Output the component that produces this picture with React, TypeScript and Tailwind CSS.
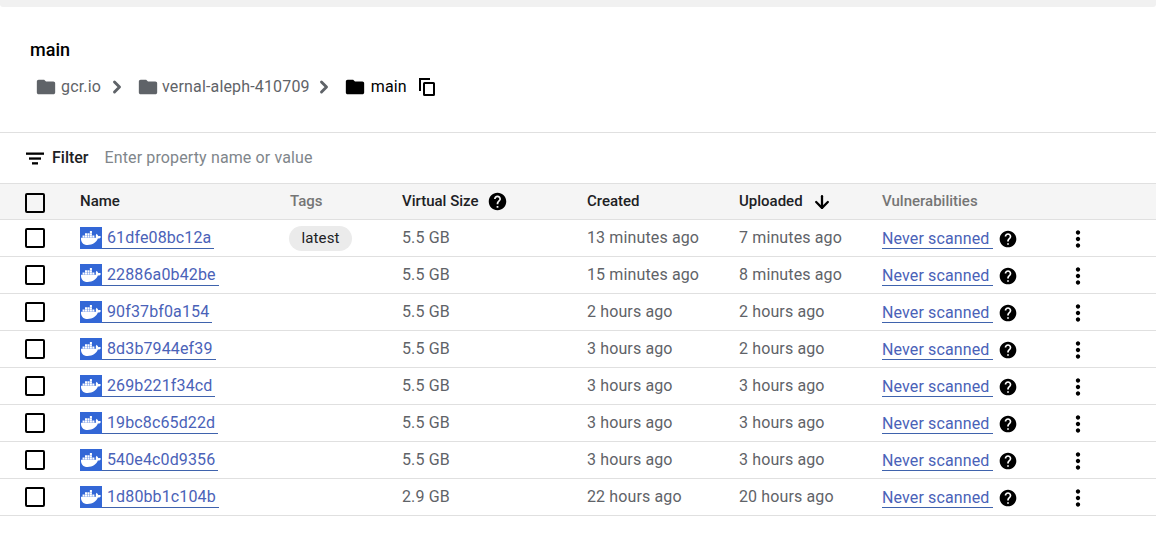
import { ArrowDown, ChevronRight } from "lucide-react";
import { FaDocker } from "react-icons/fa";
import { MdFolder, MdHelp, MdMoreVert } from "react-icons/md";

const images = [
  { digest: "61dfe08bc12a", tag: "latest", size: "5.5 GB", created: "13 minutes ago", uploaded: "7 minutes ago" },
  { digest: "22886a0b42be", size: "5.5 GB", created: "15 minutes ago", uploaded: "8 minutes ago" },
  { digest: "90f37bf0a154", size: "5.5 GB", created: "2 hours ago", uploaded: "2 hours ago" },
  { digest: "8d3b7944ef39", size: "5.5 GB", created: "3 hours ago", uploaded: "2 hours ago" },
  { digest: "269b221f34cd", size: "5.5 GB", created: "3 hours ago", uploaded: "3 hours ago" },
  { digest: "19bc8c65d22d", size: "5.5 GB", created: "3 hours ago", uploaded: "3 hours ago" },
  { digest: "540e4c0d9356", size: "5.5 GB", created: "3 hours ago", uploaded: "3 hours ago" },
  { digest: "1d80bb1c104b", size: "2.9 GB", created: "22 hours ago", uploaded: "20 hours ago" },
];

const columns = "grid grid-cols-[80px_210px_112px_185px_152px_143px_185px_1fr] items-center";

function Checkbox({ className = "" }: { className?: string }) {
  return <div className={`ml-[25px] h-[20px] w-[20px] rounded-[2px] border-2 border-black ${className}`} />;
}

function Crumb({ label, gap, current }: { label: string; gap: string; current?: boolean }) {
  return (
    <div className={`flex items-center ${current ? "text-black" : "text-[#5f6368]"}`}>
      <MdFolder className="h-[22px] w-[22px]" />
      <span className={`text-[16px] tracking-[0.01em] ${gap}`}>{label}</span>
    </div>
  );
}

function CopyIcon() {
  return (
    <svg viewBox="0 0 16 18" className="ml-[12px] h-[18px] w-[16px] text-black" fill="none" stroke="currentColor" strokeWidth="2">
      <path d="M1 13V1h10" />
      <rect x="5" y="5" width="10" height="12" rx="0.5" />
    </svg>
  );
}

function FilterIcon() {
  return (
    <svg viewBox="0 0 18 12" className="h-[13px] w-[18px] text-black" fill="currentColor">
      <rect x="0" y="0" width="18" height="2.3" />
      <rect x="3" y="4.9" width="12" height="2.3" />
      <rect x="6" y="9.7" width="6" height="2.3" />
    </svg>
  );
}

export default function App() {
  return (
    <div className="h-[539px] w-[1156px] overflow-hidden bg-white" style={{ fontFamily: "Roboto, sans-serif" }}>
      <div className="h-[7px] rounded-b-[3px] bg-[#f1f1f1]" />

      {/* Title and breadcrumb */}
      <div className="h-[126px] border-b border-[#e0e0e0] pt-[32px] pl-[30px]">
        <h1 className="text-[18px] leading-[22px] font-medium text-black">main</h1>
        <div className="mt-[11px] ml-[5px] flex h-[30px] items-center">
          <Crumb label="gcr.io" gap="ml-[4px]" />
          <ChevronRight className="mr-[10px] ml-[6px] h-[20px] w-[20px] text-[#5f6368]" strokeWidth={3.5} />
          <Crumb label="vernal-aleph-410709" gap="ml-[3px]" />
          <ChevronRight className="mr-[10px] ml-[4px] h-[20px] w-[20px] text-[#5f6368]" strokeWidth={3.5} />
          <Crumb label="main" gap="ml-[5px]" current />
          <CopyIcon />
        </div>
      </div>

      {/* Filter */}
      <div className="flex h-[50px] items-center pl-[26px]">
        <FilterIcon />
        <span className="ml-[8px] text-[16px] font-medium text-[#202124]">Filter</span>
        <span className="ml-[16px] text-[16px] tracking-[0.008em] text-[#80868b]">Enter property name or value</span>
      </div>

      {/* Table header */}
      <div className={`${columns} h-[37px] border-y border-[#e0e0e0] bg-[#f5f5f5] text-[15px] font-medium`}>
        <Checkbox className="mt-[2px]" />
        <span className="text-[#202124]">Name</span>
        <span className="text-[#757575]">Tags</span>
        <div className="flex items-center text-[#202124]">
          Virtual Size
          <MdHelp className="ml-[8px] h-[21px] w-[21px] text-black" />
        </div>
        <span className="text-[#202124]">Created</span>
        <div className="flex items-center text-[#202124]">
          Uploaded
          <ArrowDown className="ml-[9px] h-[20px] w-[20px] text-black" strokeWidth={2.75} />
        </div>
        <span className="text-[#757575]">Vulnerabilities</span>
        <span />
      </div>

      {/* Rows */}
      {images.map((image) => (
        <div key={image.digest} className={`${columns} h-[37px] border-b border-[#e0e0e0] text-[16px] tracking-[0.008em] text-[#5f6368]`}>
          <Checkbox />
          <div className="flex items-center">
            <a className="flex h-[22px] items-center border-b border-[#3f63ad] pr-[3px] text-[#4a62b8]">
              <span className="flex h-[22px] w-[22px] items-center justify-center bg-[#3367d6]">
                <FaDocker className="h-[20px] w-[20px] text-white" />
              </span>
              <span className="ml-[5px] pt-[1px]">{image.digest}</span>
            </a>
          </div>
          <div className="flex items-center">
            {image.tag && (
              <span className="-ml-px flex h-[25px] w-[63px] items-center justify-center rounded-full bg-[#ebebeb] text-[15px] text-[#202124]">
                {image.tag}
              </span>
            )}
          </div>
          <span>{image.size}</span>
          <span>{image.created}</span>
          <span>{image.uploaded}</span>
          <div className="flex items-center">
            <a className="flex h-[22px] w-[111px] items-center border-b border-[#3f63ad] pt-[2px] text-[#4a62b8]">Never scanned</a>
            <MdHelp className="mt-[1px] ml-[5px] h-[20px] w-[20px] text-black" />
          </div>
          <MdMoreVert className="mt-[1px] -ml-[2px] h-[26px] w-[26px] text-black" />
        </div>
      ))}
    </div>
  );
}
